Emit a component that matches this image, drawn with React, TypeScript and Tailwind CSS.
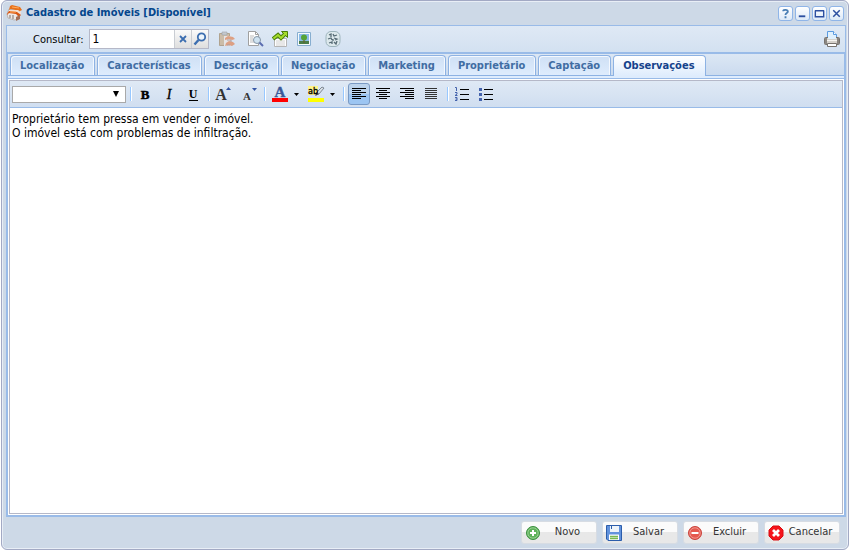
import type { ReactNode } from "react";

const tabs = [
  "Localização",
  "Características",
  "Descrição",
  "Negociação",
  "Marketing",
  "Proprietário",
  "Captação",
  "Observações",
];

const HousesIcon = () => (
  <svg viewBox="0 0 16 16" className="h-4 w-4">
    <path d="M1 9 3 4l10 2v8l-5 1-6-2z" fill="#ece8e6" stroke="#a39792" strokeWidth=".6" />
    <path d="m4 1 2-1 8 2 2 3-2 1-9-2-2 1z" fill="#e8701a" />
    <path d="M4 5h8l2 2 1-1v3l-9-1-4 1z" fill="#f3dfd2" />
    <path d="m1 9 2-3 8 1 4 3-2 2-3-3-7-1-2 2z" fill="#d95712" />
    <path d="M4 7h6M6 2l7 1" stroke="#ffab5c" />
    <path d="M4 10v3m3-3v4" stroke="#8f8480" strokeWidth="1.2" />
    <path d="m10 12 4-2v4l-4 2z" fill="#a3705a" />
  </svg>
);

const PasteIcon = () => (
  <svg viewBox="0 0 16 16" className="h-4 w-4 opacity-60">
    <path d="M.5 2.500h10v12H.5z" fill="#c4a277" stroke="#96784e" />
    <path d="M3 1h5v3H3z" fill="#b5b5b5" stroke="#777" strokeWidth=".6" />
    <path d="M5 5h7v10H5z" fill="#efe6e0" />
    <path d="m6 7 3-2 5 1 2 2-3 1-3-1-4 1zm1 5 3-2 4 1 2 2-3 2-3-1-4 1z" fill="#e1733a" />
    <path d="M8 9h4v2M8 14h3" fill="none" stroke="#94736a" />
  </svg>
);

const PreviewIcon = () => (
  <svg viewBox="0 0 16 16" className="h-4 w-4">
    <path d="M.5.5h7l3 3v11H.5z" fill="#fff" stroke="#a0a0a0" />
    <path d="M7.500 .5v3h3" fill="none" stroke="#a0a0a0" />
    <path d="M2 5h4M2 7h3M2 9h3M2 11h4" stroke="#bbb" />
    <circle cx="9" cy="9" r="3.500" fill="#cfe3f2" stroke="#8596a6" />
    <path d="m11.500 11.500 3.500 3.500" stroke="#5b6db0" strokeWidth="2" />
  </svg>
);

const ChartIcon = () => (
  <svg viewBox="0 0 16 16" className="h-4 w-4">
    <path d="M2.500 7.500h12v8h-12z" fill="#fff" stroke="#b5b5b5" />
    <path d="M4 10h9M4 12h9M4 14h9" stroke="#d0d0d0" />
    <path d="m1 8 5-4 3 3 4-4" fill="none" stroke="#4a7f08" strokeWidth="4" />
    <path d="M9.500 .5h6v6z" fill="#a6dc2c" stroke="#4a7f08" />
    <path d="m1.500 7.500 4.500-3.500 3 3 5-5" fill="none" stroke="#a6dc2c" strokeWidth="2" />
  </svg>
);

const PhotoIcon = () => (
  <svg viewBox="0 0 16 16" className="h-4 w-4">
    <path d="M1.500 1.500h13v13h-13z" fill="#f5f9fc" stroke="#87aed0" />
    <path d="M3 3h10v10H3z" fill="#8abbe8" />
    <path d="M3 10h10v3H3z" fill="#4b7d48" />
    <circle cx="8" cy="6.500" r="3" fill="#55a334" />
    <path d="M8 9v3" stroke="#6b5a2a" />
  </svg>
);

const GlobeIcon = () => (
  <svg viewBox="0 0 16 16" className="h-4 w-4">
    <rect x="1" y=".5" width="14" height="15" rx="5" fill="#dce8ec" stroke="#9db4bc" />
    <path d="m4 4 2-1v3M8 3l1 2 3-1M3 8l3-1 1 2M9 7l3 1-2 1M4 12l3-1v2M9 11l2 2 1-3M8 8v2" fill="none" stroke="#566b75" strokeWidth="1.300" />
  </svg>
);

const PrinterIcon = () => (
  <svg viewBox="0 0 16 16" className="h-4 w-4">
    <path d="M3.500 7.500v-7h6l3 3v4z" fill="#dff0fd" stroke="#5b9be0" />
    <path d="M9.500.5v3h3" fill="#fff" stroke="#5b9be0" />
    <rect x=".5" y="6.500" width="15" height="7" rx="1" fill="#d6d2cc" stroke="#77736e" />
    <path d="M1 7h2v6H1zm12 0h2v6h-2z" fill="#8a8681" />
    <path d="M4 5h8v3H4z" fill="#dff0fd" />
    <path d="M3 9.500h10" stroke="#f7f5f1" />
    <path d="M3.500 12.500h9v3h-9z" fill="#fff" stroke="#77736e" />
  </svg>
);

const SearchIcon = () => (
  <svg viewBox="0 0 14 14" className="h-3.5 w-3.5">
    <circle cx="8.500" cy="5" r="3.700" fill="#eef5fc" stroke="#3c6eb0" strokeWidth="1.800" />
    <path d="m5.500 8-4 4.500" stroke="#3c6eb0" strokeWidth="2.400" />
  </svg>
);

const NewIcon = () => (
  <svg viewBox="0 0 16 16" className="h-4 w-4">
    <circle cx="8" cy="8" r="6.500" fill="#5fb15a" stroke="#3b8f3f" />
    <circle cx="8" cy="8" r="5.200" fill="none" stroke="#a5d99f" strokeWidth=".8" />
    <path d="M8 5v6M5 8h6" stroke="#fff" strokeWidth="2" />
  </svg>
);

const SaveIcon = () => (
  <svg viewBox="0 0 16 16" className="h-4 w-4">
    <path d="M.5.5h15v15H2L.5 14z" fill="#6192dc" stroke="#2c5dab" />
    <path d="M4 1h9v6H4z" fill="#edf3fa" />
    <path d="M5.500 1v3" stroke="#2c5dab" />
    <path d="M3 9.500h10V15H3z" fill="#fff" />
    <path d="M4 11.500h8M4 13.500h8" stroke="#76b851" strokeWidth="1.400" />
  </svg>
);

const DeleteIcon = () => (
  <svg viewBox="0 0 16 16" className="h-4 w-4">
    <circle cx="8" cy="8" r="6.500" fill="#e5594f" stroke="#c9443d" />
    <circle cx="8" cy="8" r="5.200" fill="none" stroke="#f4a59d" strokeWidth=".8" />
    <path d="M4.500 8h7" stroke="#fff" strokeWidth="2" />
  </svg>
);

const CancelIcon = () => (
  <svg viewBox="0 0 16 16" className="h-4 w-4">
    <path d="M5 1h6l4 4v6l-4 4H5l-4-4V5z" fill="#f5141b" stroke="#d90d12" />
    <path d="m5 5 6 6m0-6-6 6" stroke="#fff" strokeWidth="2.800" />
  </svg>
);

const actions = [
  { label: "Novo", icon: <NewIcon /> },
  { label: "Salvar", icon: <SaveIcon /> },
  { label: "Excluir", icon: <DeleteIcon /> },
  { label: "Cancelar", icon: <CancelIcon /> },
];

const windowTools = [
  {
    label: "Ajuda",
    icon: <path d="M4.500 4.500C4.500 2.500 9.500 2.500 9.500 5 9.500 6.500 7 6.500 7 8.500M7 10v2" fill="none" stroke="#4a7fb5" strokeWidth="2" />,
  },
  { label: "Minimizar", icon: <path d="M3 10h7" stroke="#2c4fa0" strokeWidth="2" /> },
  {
    label: "Maximizar",
    icon: <path d="M2 4h10M2.500 4v6.500h9V4" fill="none" stroke="#2c4fa0" strokeWidth="1.500" />,
  },
  { label: "Fechar", icon: <path d="m3.500 3.500 7 7m0-7-7 7" stroke="#2c4fa0" strokeWidth="1.600" /> },
];

const Divider = () => <span className="mr-0.5 ml-1 h-3.5 w-0.5 border-l border-[#98c8ff] bg-white" />;

const ToolButton = ({ label, active, children }: { label: string; active?: boolean; children: ReactNode }) => (
  <button
    type="button"
    aria-label={label}
    className={
      active
        ? "flex h-[22px] w-[22px] items-center justify-center rounded-[3px] border border-[#7a9ac4] bg-linear-to-b from-[#bcd3ec] from-50% to-[#9cc5f2] to-50%"
        : "flex h-[22px] w-[22px] items-center justify-center"
    }
  >
    <svg viewBox="0 0 16 16" className="h-4 w-4">
      {children}
    </svg>
  </button>
);

const MenuButton = ({ label, children }: { label: string; children: ReactNode }) => (
  <button type="button" aria-label={label} className="flex h-[22px] w-8 items-center justify-between">
    <svg viewBox="0 0 18 16" className="h-4 w-[18px] overflow-visible">
      {children}
    </svg>
    <svg viewBox="0 0 5 3" className="mr-1 h-[3px] w-[5px]">
      <path d="M0 0h5L2.500 3z" />
    </svg>
  </button>
);

const EditorToolbar = () => (
  <div className="flex h-[27px] items-center border-b border-[#99bbe8] bg-linear-to-b from-[#dfe9f5] to-[#d0def0] pl-0.5">
    <div className="relative flex items-center">
      <select
        aria-label="Fonte"
        className="h-[17px] w-[114px] appearance-none border border-[#a9a9a9] bg-white text-[11px]"
      >
        <option></option>
      </select>
      <svg viewBox="0 0 6 6" className="pointer-events-none absolute right-[7px] h-1.5 w-1.5">
        <path d="M0 0h6L3 6z" />
      </svg>
    </div>
    <Divider />
    <div className="flex gap-0.5">
      <ToolButton label="Negrito">
        <text x="8" y="13" textAnchor="middle" className="font-['Liberation_Serif',serif] text-[13px] font-bold" stroke="#000" strokeWidth=".5">B</text>
      </ToolButton>
      <ToolButton label="Itálico">
        <text x="8" y="13" textAnchor="middle" className="font-['Liberation_Serif',serif] text-[14px] italic" stroke="#000" strokeWidth=".3">I</text>
      </ToolButton>
      <ToolButton label="Sublinhado">
        <text x="8" y="12" textAnchor="middle" className="font-['Liberation_Serif',serif] text-[12px] font-bold">U</text>
        <path d="M4 14.500h9" stroke="#000" />
      </ToolButton>
    </div>
    <Divider />
    <div className="flex gap-1">
      <ToolButton label="Aumentar texto">
        <text x="6" y="14" textAnchor="middle" fill="#333" className="font-['Liberation_Serif',serif] text-[16px] font-bold">A</text>
        <path d="M11 4h5l-2.500-3z" fill="#3556a5" />
      </ToolButton>
      <ToolButton label="Diminuir texto">
        <text x="6" y="14" textAnchor="middle" fill="#333" className="font-['Liberation_Serif',serif] text-[11px] font-bold">A</text>
        <path d="M11 2h5l-2.500 3z" fill="#3556a5" />
      </ToolButton>
    </div>
    <Divider />
    <div className="flex gap-1 pl-[3px]">
      <MenuButton label="Cor do texto">
        <text x="9" y="11" textAnchor="middle" fill="#3b5998" className="font-['Liberation_Serif',serif] text-[15px] font-bold" stroke="#3b5998" strokeWidth=".4">A</text>
        <path d="M1 12h16v4H1z" fill="red" />
      </MenuButton>
      <MenuButton label="Cor de realce">
        <path d="M1 0h10v9H1z" fill="#fff58a" />
        <path d="m9 9 1-3 5-5 2 1-5 6z" fill="#d8dfe5" stroke="#69747e" strokeWidth=".8" />
        <path d="m8 10 2-4 2 2z" fill="#444" />
        <text x="1" y="8" className="font-['DejaVu_Sans_Condensed',sans-serif] text-[9px]" stroke="#000" strokeWidth=".3">ab</text>
        <path d="M1 12h16v4H1z" fill="#ff0" />
      </MenuButton>
    </div>
    <Divider />
    <div className="flex gap-0.5 px-px">
      <ToolButton label="Alinhar à esquerda" active>
        <path d="M1 2.500h14M1 4.500h9M1 6.500h14M1 8.500h9M1 10.500h14M1 12.500h9" stroke="#000" />
      </ToolButton>
      <ToolButton label="Centralizar">
        <path d="M1 2.500h14M4 4.500h8M1 6.500h14M4 8.500h8M1 10.500h14M4 12.500h8" stroke="#000" />
      </ToolButton>
      <ToolButton label="Alinhar à direita">
        <path d="M1 2.500h14M6 4.500h9M1 6.500h14M6 8.500h9M1 10.500h14M6 12.500h9" stroke="#000" />
      </ToolButton>
      <ToolButton label="Justificar">
        <path d="M2 2.500h12M2 4.500h12M2 6.500h12M2 8.500h12M2 10.500h12M2 12.500h12" stroke="#333" />
      </ToolButton>
    </div>
    <Divider />
    <div className="flex gap-0.5">
      <ToolButton label="Lista numerada">
        <path d="M6 3.500h9M6 8.500h9M6 13.500h9" stroke="#000" />
        <path d="M1 1.500h1.500V5M1 6.500h2v1.500l-2 1.500h2.500M1 11.500h2v3H1M1.500 13H3" fill="none" stroke="#4463ad" />
      </ToolButton>
      <ToolButton label="Lista com marcadores">
        <path d="M6 3.500h9M6 8.500h9M6 13.500h9" stroke="#000" />
        <path d="M1 2h3v3H1zm0 5h3v3H1zm0 5h3v3H1z" fill="#4463ad" />
      </ToolButton>
    </div>
  </div>
);

const SearchBar = () => (
  <div className="flex h-7 items-center border-b-2 border-[#99bbe8] bg-linear-to-b from-[#dfe9f5] to-[#d3e1f1] pr-[5px] pl-[26px] text-[11px]">
    <label htmlFor="consultar" className="pt-0.5">Consultar:</label>
    <div className="ml-[5px] flex h-5 border border-[#b5b8c8]">
      <input id="consultar" defaultValue="1" className="w-[84px] bg-white px-[3px] text-[12px] outline-none" />
      <button type="button" aria-label="Limpar" className="flex w-[17px] items-center justify-center border-l border-[#c9cdd3] bg-linear-to-b from-[#fafafa] to-[#dedede]">
        <svg viewBox="0 0 8 8" className="h-2 w-2">
          <path d="m1 1 6 6m0-6L1 7" stroke="#3c6eb0" strokeWidth="1.800" />
        </svg>
      </button>
      <button type="button" aria-label="Pesquisar" className="flex w-[17px] items-center justify-center border-l border-[#c9cdd3] bg-linear-to-b from-[#fafafa] to-[#dedede]">
        <SearchIcon />
      </button>
    </div>
    <button type="button" aria-label="Colar" className="ml-2.5"><PasteIcon /></button>
    <button type="button" aria-label="Visualizar" className="ml-[13px]"><PreviewIcon /></button>
    <button type="button" aria-label="Gráfico" className="ml-2"><ChartIcon /></button>
    <button type="button" aria-label="Fotos" className="ml-2"><PhotoIcon /></button>
    <button type="button" aria-label="Mapa" className="ml-[13px]"><GlobeIcon /></button>
    <button type="button" aria-label="Imprimir" className="ml-auto"><PrinterIcon /></button>
  </div>
);

export default function App() {
  return (
    <div className="h-screen bg-white pl-px font-['DejaVu_Sans_Condensed','DejaVu_Sans',sans-serif]">
      <main className="flex h-full flex-col rounded-md border border-[#a2a9c4] bg-[#cdd9e7] pr-0.5 pb-1.5 pl-1 shadow-[inset_0_0_0_1px_#e8eef6]">
        <header className="flex h-6 items-center justify-between pr-0.5">
          <h1 className="flex items-center gap-1 text-[11px] font-bold text-[#04468c]">
            <HousesIcon />
            Cadastro de Imóveis [Disponível]
          </h1>
          <div className="flex gap-0.5">
            {windowTools.map((tool) => (
              <button
                key={tool.label}
                type="button"
                aria-label={tool.label}
                className="h-[15px] w-[15px] rounded-[3px] border border-[#8fb5e8] bg-linear-to-b from-white to-[#dce9f8]"
              >
                <svg viewBox="0 0 14 14" className="h-[13px] w-[13px]">
                  {tool.icon}
                </svg>
              </button>
            ))}
          </div>
        </header>

        <section className="flex min-h-0 flex-1 flex-col border border-[#99bbe8]">
          <SearchBar />
          <div className="flex min-h-0 flex-1 flex-col border-x border-b border-[#99bbe8] bg-[#deecfd]">
            <nav role="tablist" className="flex h-[22px] items-end gap-0.5 border-b border-[#8db2e3] bg-linear-to-b from-[#dce7f4] to-[#cbdbef] pl-0.5">
              {tabs.map((tab) => (
                <button
                  key={tab}
                  type="button"
                  role="tab"
                  aria-selected={tab === "Observações"}
                  className={
                    tab === "Observações"
                      ? "-mb-px h-[21px] rounded-t-[4px] border border-b-0 border-[#8db2e3] bg-linear-to-b from-white to-[#deecfd] pt-px pr-2.5 pl-[9px] text-[11px] font-bold text-[#15428b]"
                      : "h-5 rounded-t-[4px] border border-b-0 border-[#8db2e3] bg-linear-to-b from-[#cfe0f5] to-[#deecfd] pt-0.5 pr-2.5 pl-[9px] text-[11px] font-bold text-[#416da3] shadow-[inset_1px_1px_0_#f4f8fe,inset_-1px_0_0_#f4f8fe]"
                  }
                >
                  {tab}
                </button>
              ))}
            </nav>
            <div className="mt-0.5 flex min-h-0 flex-1 flex-col border-t border-[#99bbe8] bg-white p-px">
              <div className="flex min-h-0 flex-1 flex-col border border-[#b5b8c8]">
                <EditorToolbar />
                <textarea
                  aria-label="Observações"
                  defaultValue={"Proprietário tem pressa em vender o imóvel.\nO imóvel está com problemas de infiltração."}
                  className="w-full flex-1 resize-none bg-white px-0.5 pt-1 text-[12px] leading-[14px] outline-none"
                />
              </div>
            </div>
          </div>
        </section>

        <footer className="flex justify-end gap-[7px] pt-[5px] pr-[7px]">
          {actions.map((action) => (
            <button
              key={action.label}
              type="button"
              className="flex h-[21px] w-[74px] items-center rounded-[2px] bg-linear-to-b from-[#fbfbfb] from-50% to-[#e8e8e8] to-50% pr-0.5 pl-[3px] text-[11px] text-[#333] shadow-[0_0_0_1px_#d7dce3]"
            >
              {action.icon}
              <span className="flex-1 text-center">{action.label}</span>
            </button>
          ))}
        </footer>
      </main>
    </div>
  );
}
